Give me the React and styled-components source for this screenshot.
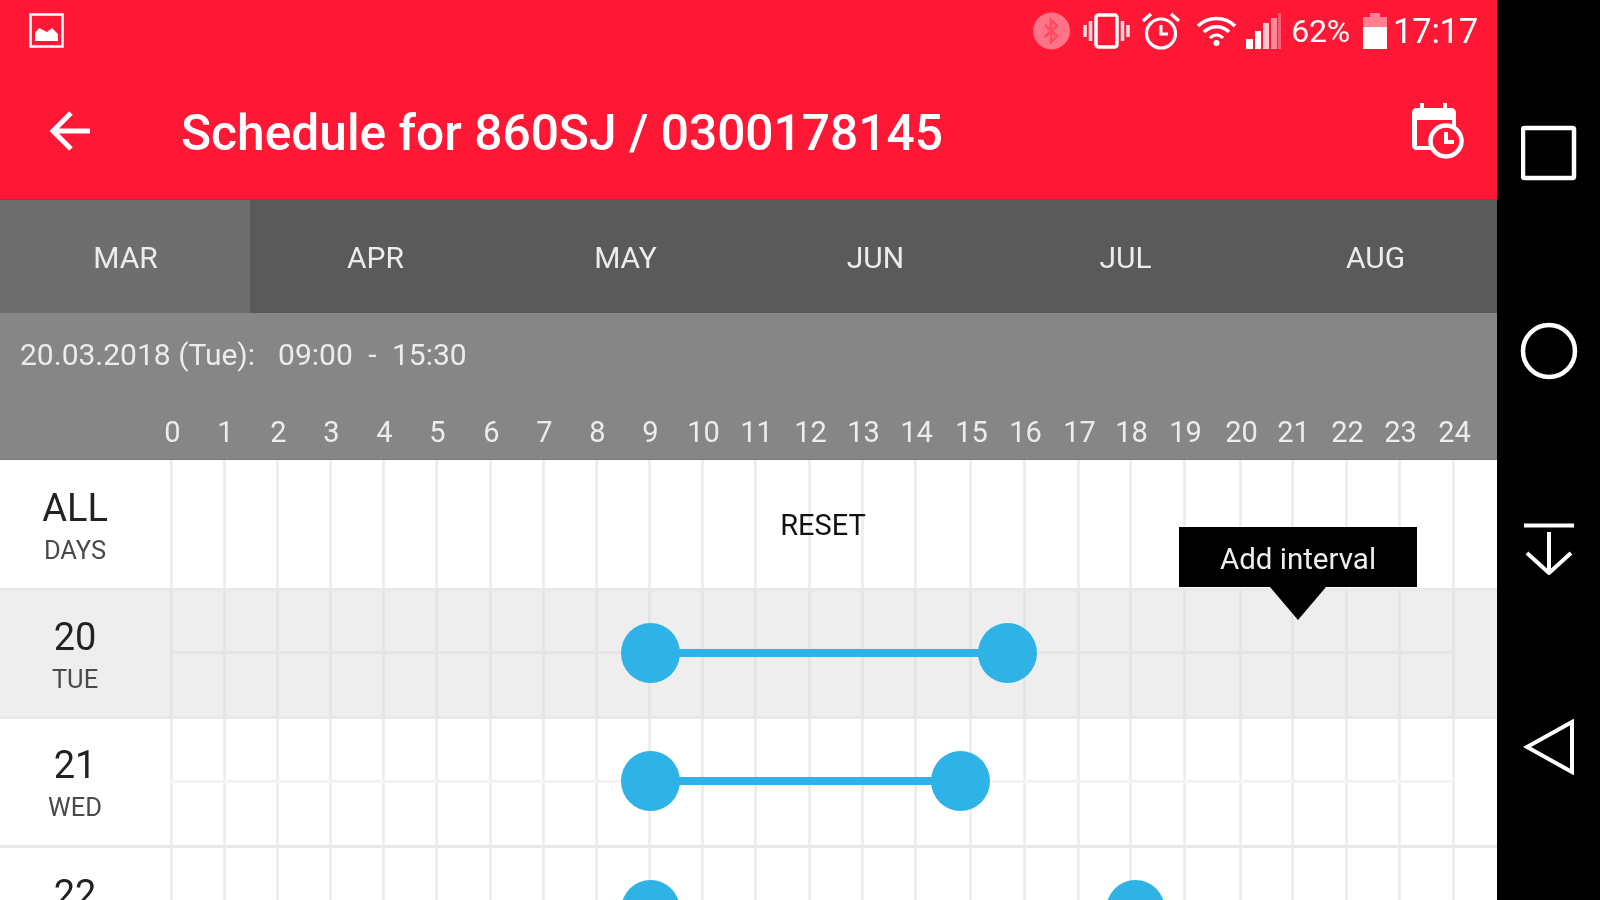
// Schedule screen, landscape phone
import React from 'react';
import styled, { createGlobalStyle } from 'styled-components';

const HOUR = 53.4;
const TRACK_LEFT = 170;

// measured x of each hour line, they are not evenly spaced on the device
const hourLines = [
  171, 224, 277, 330, 383, 436, 490, 543, 596, 649, 702, 755, 809,
  862, 915, 970, 1024, 1078, 1130, 1184, 1240, 1292, 1346, 1399, 1453,
];

const GlobalStyle = createGlobalStyle`
  html, body {
    margin: 0;
    padding: 0;
    background: #000;
  }
  body {
    font-family: Roboto, "Liberation Sans", sans-serif;
  }
`;

const Screen = styled.div`
  width: 1600px;
  height: 900px;
  display: flex;
  overflow: hidden;
  filter: blur(0.6px);
`;

const Main = styled.div`
  width: 1497px;
  flex: none;
  display: flex;
  flex-direction: column;
  background: #fff;
`;

const Header = styled.header`
  height: 200px;
  flex: none;
  box-sizing: border-box;
  background: #ff1836;
  color: #fff;
  border-bottom: 1px solid #c8223c;
`;

const StatusBar = styled.div`
  height: 60px;
  display: flex;
  align-items: center;
  padding: 1px 19px 0 29px;
  box-sizing: border-box;
`;

const StatusIcons = styled.div`
  margin-left: auto;
  display: flex;
  align-items: center;
`;

const StatusIcon = styled.svg`
  display: block;
  margin-right: ${props => props.$gap || 0}px;
`;

const StatusText = styled.span`
  font-size: ${props => props.$size}px;
  line-height: 1;
  margin-right: ${props => props.$gap || 0}px;
  padding-top: 1px;
  letter-spacing: -0.2px;
`;

const Toolbar = styled.div`
  height: 139px;
  display: flex;
  align-items: center;
  padding: 2px 33px 0 50px;
  box-sizing: border-box;
`;

const Title = styled.h1`
  margin: 7px 0 0 89px;
  font-size: 49.7px;
  font-weight: 500;
  line-height: 1;
  white-space: nowrap;
`;

const ToolbarAction = styled.svg`
  display: block;
  margin-left: auto;
`;

const Tabs = styled.div`
  height: 113px;
  flex: none;
  display: flex;
  overflow: hidden;
  background: #5a5a5a;
`;

const Tab = styled.div`
  width: 250px;
  flex: none;
  padding: 2px 0 0 1px;
  box-sizing: border-box;
  display: flex;
  align-items: center;
  justify-content: center;
  font-size: 30px;
  color: #ececec;
  background: ${props => (props.$active ? '#6e6e6e' : 'transparent')};
`;

const InfoBar = styled.div`
  height: 147px;
  flex: none;
  background: #868686;
  color: #ececec;
  display: flex;
  flex-direction: column;
  border-bottom: 1px solid #7a7a7a;
  box-sizing: border-box;
`;

const DateLine = styled.div`
  height: 80px;
  padding: 2px 0 0 20px;
  box-sizing: border-box;
  display: flex;
  align-items: center;
  gap: 23px;
  font-size: 30px;
`;

const TimeRange = styled.span`
  word-spacing: 8px;
`;

const HourScale = styled.div`
  display: flex;
  margin-left: ${hourLines[0] + 1.5}px;
  padding-top: 21px;
`;

const HourLabel = styled.span`
  flex: none;
  font-size: 29px;
  line-height: 36px;
`;

const HourText = styled.span`
  display: inline-block;
  transform: translateX(-50%);
`;

const Rows = styled.div`
  flex: 1;
  min-height: 0;
  display: flex;
  flex-direction: column;
`;

const Row = styled.div`
  height: ${props => (props.$first ? 130.5 : 128.5)}px;
  flex: none;
  display: flex;
  box-sizing: border-box;
  background: ${props => (props.$today ? '#eeeeee' : '#ffffff')};
  border-bottom: 3px solid ${props => (props.$today ? '#e8e8e8' : '#e9e9e9')};
`;

const DayLabel = styled.div`
  width: ${TRACK_LEFT}px;
  flex: none;
  padding: ${props => (props.$first ? 4 : 2)}px 20px 0 0;
  box-sizing: border-box;
  display: flex;
  flex-direction: column;
  align-items: center;
  justify-content: center;
`;

const DayValue = styled.div`
  font-size: 38px;
  line-height: 44px;
  color: #222;
`;

const DayName = styled.div`
  font-size: 25.5px;
  line-height: 30px;
  margin-top: 5px;
  color: #4a4a4a;
`;

const Track = styled.div`
  position: relative;
  width: 1285px;
  flex: none;
  display: flex;
  align-items: center;
  justify-content: center;
  padding: 2px 0 0 21px;
  box-sizing: border-box;
`;

const GridLine = styled.div`
  position: absolute;
  top: 0;
  bottom: 0;
  width: 3px;
  margin-left: -1.5px;
  background: ${props => (props.$today ? '#e4e4e4' : '#eeeeee')};
`;

const MidLine = styled.div`
  position: absolute;
  left: 0;
  right: 0;
  top: 50%;
  height: 3px;
  margin-top: -2px;
  background: ${props => (props.$today ? '#e5e5e5' : '#f3f3f3')};
`;

const ResetButton = styled.span`
  position: relative;
  font-size: 29px;
  color: #111;
`;

const Interval = styled.div`
  position: absolute;
  top: 50%;
  height: 8px;
  margin-top: -4.5px;
  background: #2fb2e6;
`;

const Handle = styled.div`
  position: absolute;
  top: 50%;
  width: 59px;
  height: 60px;
  margin: -30.5px 0 0 -27.5px;
  border-radius: 50%;
  background: #2fb2e6;
`;

const Tooltip = styled.div`
  position: absolute;
  left: 1179px;
  top: 527px;
  width: 238px;
  height: 60px;
  padding-top: 3px;
  box-sizing: border-box;
  background: #000;
  color: #eee;
  display: flex;
  align-items: center;
  justify-content: center;
  font-size: 29.5px;

  &::after {
    content: '';
    position: absolute;
    left: 91px;
    top: 60px;
    border-style: solid;
    border-width: 33px 28px 0 28px;
    border-color: #000 transparent transparent transparent;
  }
`;

const NavBar = styled.nav`
  flex: 1;
  background: #000;
  padding: 54px 0;
  display: flex;
  flex-direction: column;
  align-items: center;
`;

const NavButton = styled.div`
  height: 198px;
  flex: none;
  display: flex;
  align-items: center;
  justify-content: center;
`;

const days = [
  { value: '20', name: 'TUE', today: true, from: 8.97, to: 15.64 },
  { value: '21', name: 'WED', from: 8.97, to: 14.76 },
  { value: '22', name: 'THU', from: 8.97, to: 18.04, cut: true },
];

const months = ['MAR', 'APR', 'MAY', 'JUN', 'JUL', 'AUG'];

const ImageIcon = () => (
  <StatusIcon width="35" height="35" viewBox="0 0 35 35">
    <rect x="1.5" y="1.5" width="32" height="32" fill="none" stroke="#fff" strokeWidth="2.5" />
    <path d="M6 28 V20 L10 15 L14 17 L18 19 L23 15 L29 21 V28 Z" fill="#fff" />
  </StatusIcon>
);

const BluetoothIcon = () => (
  <StatusIcon $gap={13} width="37" height="38" viewBox="0 0 37 38">
    <circle cx="18.5" cy="19" r="18.5" fill="#fff" opacity="0.4" />
    <path d="M12 13 L24 24 L18 30 V8 L24 14 L12 25" fill="none" stroke="#ff1836" strokeOpacity="0.45" strokeWidth="2.5" />
  </StatusIcon>
);

const VibrateIcon = () => (
  <StatusIcon $gap={11} width="47" height="36" viewBox="0 0 47 36">
    <rect x="13" y="2" width="21" height="32" rx="2.5" fill="none" stroke="#fff" strokeWidth="3.5" />
    <path d="M7.5 8 V28 M2 12 V24 M39.5 8 V28 M45 12 V24" stroke="#fff" strokeWidth="3.5" opacity="0.85" />
  </StatusIcon>
);

const AlarmIcon = () => (
  <StatusIcon $gap={15} width="40" height="38" viewBox="0 0 40 38">
    <circle cx="20" cy="21.5" r="14.5" fill="none" stroke="#fff" strokeWidth="3.2" />
    <path d="M20 13 V22 H27" fill="none" stroke="#fff" strokeWidth="3" />
    <path d="M2 9 L10 2 M38 9 L30 2" stroke="#fff" strokeWidth="3.5" />
  </StatusIcon>
);

const WifiIcon = () => (
  <StatusIcon $gap={9} width="41" height="32" viewBox="0 0 41 32">
    <path d="M2 11 C12 1 29 1 39 11" fill="none" stroke="#fff" strokeWidth="3.5" />
    <path d="M8 17 C15 10 26 10 33 17" fill="none" stroke="#fff" strokeWidth="3.5" />
    <path d="M14 23 C18 19 23 19 27 23" fill="none" stroke="#fff" strokeWidth="3" />
    <circle cx="20.5" cy="28" r="3" fill="#fff" />
  </StatusIcon>
);

const SignalIcon = () => (
  <StatusIcon $gap={10} width="35" height="36" viewBox="0 0 35 36">
    <rect x="0" y="26" width="7" height="10" fill="#fff" />
    <rect x="9" y="18" width="6" height="18" fill="#fff" />
    <rect x="17" y="10" width="6" height="26" fill="#fff" opacity="0.75" />
    <rect x="25" y="5" width="6" height="31" fill="#fff" opacity="0.5" />
    <rect x="32" y="0" width="3" height="36" fill="#fff" opacity="0.3" />
  </StatusIcon>
);

const BatteryIcon = () => (
  <StatusIcon $gap={6} width="24" height="36" viewBox="0 0 24 36">
    <path d="M7 0 H17 V4 H24 V36 H0 V4 H7 Z" fill="#fff" opacity="0.45" />
    <rect x="0" y="14" width="24" height="22" fill="#fff" />
  </StatusIcon>
);

const BackIcon = () => (
  <svg width="42" height="42" viewBox="0 0 42 42">
    <path d="M40 21 H4 M21 3 L3 21 L21 39" fill="none" stroke="#fff" strokeWidth="5" />
  </svg>
);

const ScheduleIcon = () => (
  <ToolbarAction width="52" height="56" viewBox="0 0 52 56">
    <path
      d="M8 0 H12 V5 H31 V0 H35 V5 H39 C42 5 44 7 44 10 V26 H40 V17 H5 V43 H20 V47 H5 C2 47 0 45 0 43 V10 C0 7 2 5 5 5 H8 Z"
      fill="#fff"
    />
    <circle cx="34" cy="38" r="15.5" fill="#ff1836" stroke="#fff" strokeWidth="4.5" />
    <path d="M34 29 V39 H42" fill="none" stroke="#fff" strokeWidth="4" />
  </ToolbarAction>
);

const GridLines = ({ today }) =>
  hourLines.map(x => (
    <GridLine key={x} $today={today} style={{ left: x - TRACK_LEFT }} />
  ));

const DayRow = ({ day }) => {
  const x1 = day.from * HOUR;
  const x2 = day.to * HOUR;
  return (
    <Row $today={day.today}>
      <DayLabel>
        <DayValue>{day.value}</DayValue>
        <DayName>{day.name}</DayName>
      </DayLabel>
      <Track>
        <GridLines today={day.today} />
        <MidLine $today={day.today} />
        {!day.cut && <Interval style={{ left: x1, width: x2 - x1 }} />}
        <Handle style={{ left: x1 }} />
        <Handle style={{ left: x2 }} />
      </Track>
    </Row>
  );
};

export default function App() {
  return (
    <>
      <GlobalStyle />
      <Screen>
        <Main>
          <Header>
            <StatusBar>
              <ImageIcon />
              <StatusIcons>
                <BluetoothIcon />
                <VibrateIcon />
                <AlarmIcon />
                <WifiIcon />
                <SignalIcon />
                <StatusText $size={32} $gap={13}>62%</StatusText>
                <BatteryIcon />
                <StatusText $size={34.5}>17:17</StatusText>
              </StatusIcons>
            </StatusBar>
            <Toolbar>
              <BackIcon />
              <Title>Schedule for 860SJ / 0300178145</Title>
              <ScheduleIcon />
            </Toolbar>
          </Header>
          <Tabs>
            {months.map((m, i) => (
              <Tab key={m} $active={i === 0}>{m}</Tab>
            ))}
          </Tabs>
          <InfoBar>
            <DateLine>
              <span>20.03.2018 (Tue):</span>
              <TimeRange>09:00 - 15:30</TimeRange>
            </DateLine>
            <HourScale>
              {hourLines.map((x, h) => (
                <HourLabel key={h} style={{ width: (hourLines[h + 1] || x + 40) - x }}>
                  <HourText>{h}</HourText>
                </HourLabel>
              ))}
            </HourScale>
          </InfoBar>
          <Rows>
            <Row $first>
              <DayLabel $first>
                <DayValue>ALL</DayValue>
                <DayName>DAYS</DayName>
              </DayLabel>
              <Track>
                <GridLines />
                <ResetButton>RESET</ResetButton>
              </Track>
            </Row>
            {days.map(day => (
              <DayRow key={day.value} day={day} />
            ))}
          </Rows>
        </Main>
        <NavBar>
          <NavButton>
            <svg width="56" height="56" viewBox="0 0 56 56">
              <rect x="2" y="3" width="51" height="50" rx="1.5" fill="none" stroke="#fff" strokeWidth="4.5" />
            </svg>
          </NavButton>
          <NavButton>
            <svg width="58" height="58" viewBox="0 0 58 58">
              <circle cx="29" cy="29" r="26" fill="none" stroke="#fff" strokeWidth="4.5" />
            </svg>
          </NavButton>
          <NavButton>
            <svg width="50" height="52" viewBox="0 0 50 52">
              <path d="M0 2.5 H50 M25 9 V49 M3 30 L25 50 L47 30" fill="none" stroke="#fff" strokeWidth="4" />
            </svg>
          </NavButton>
          <NavButton>
            <svg width="52" height="56" viewBox="0 0 52 56">
              <path d="M4 28 L49 3 V53 Z" fill="none" stroke="#fff" strokeWidth="4" />
            </svg>
          </NavButton>
        </NavBar>
        <Tooltip>Add interval</Tooltip>
      </Screen>
    </>
  );
}
